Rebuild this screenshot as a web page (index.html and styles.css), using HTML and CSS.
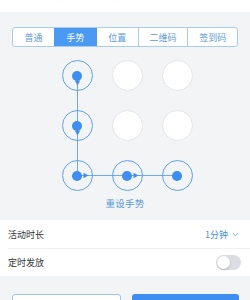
FILE: index.html
```html
<!DOCTYPE html>
<html lang="zh">
<head>
<meta charset="utf-8">
<link rel="stylesheet" href="styles.css">
</head>
<body>
<div class="header"><p class="hint">学生需按照设置的手势图案完成签到</p></div>

<div class="tabs">
  <div class="tab">普通</div>
  <div class="tab active">手势</div>
  <div class="tab">位置</div>
  <div class="tab">二维码</div>
  <div class="tab">签到码</div>
</div>

<div class="pattern-wrap">
  <div class="pattern">
    <svg class="lines" width="131" height="131" viewBox="0 0 131 131">
      <path d="M15.5 15.5 V115.5 H115.5" fill="none" stroke="#6aa9ee" stroke-width="1"/>
      <path d="M12.8 20.5 L18.2 20.5 L15.5 25.5 Z" fill="#3d8ef0"/>
      <path d="M12.8 70.5 L18.2 70.5 L15.5 75.5 Z" fill="#3d8ef0"/>
      <path d="M21.5 112.8 L21.5 118.2 L26.5 115.5 Z" fill="#3d8ef0"/>
      <path d="M71.5 112.8 L71.5 118.2 L76.5 115.5 Z" fill="#3d8ef0"/>
    </svg>
    <div class="node on"><span class="dot"></span></div>
    <div class="node"></div>
    <div class="node"></div>
    <div class="node on"><span class="dot"></span></div>
    <div class="node"></div>
    <div class="node"></div>
    <div class="node on"><span class="dot"></span></div>
    <div class="node on"><span class="dot"></span></div>
    <div class="node on"><span class="dot"></span></div>
  </div>
</div>
<div class="reset">重设手势</div>

<div class="list">
  <div class="row">
    <span class="label">活动时长</span>
    <span class="value">1分钟
      <svg class="chev" width="7" height="5" viewBox="0 0 7 5"><path d="M0.8 1 L3.5 3.7 L6.2 1" fill="none" stroke="#7fb0e8" stroke-width="1"/></svg>
    </span>
  </div>
  <div class="row">
    <span class="label">定时发放</span>
    <span class="switch"><span class="knob"></span></span>
  </div>
</div>

<div class="actions">
  <div class="btn ghost"></div>
  <div class="btn primary"></div>
</div>
</body>
</html>
```
FILE: styles.css
```css
* { box-sizing: border-box; }
html, body { margin: 0; padding: 0; }
body {
  width: 250px;
  height: 300px;
  overflow: hidden;
  background: #f3f4f6;
  font-family: "Noto Sans CJK SC", "Noto Sans", sans-serif;
}
.header {
  height: 12px;
  background: #fff;
  overflow: hidden;
  padding-left: 8px;
}
.hint {
  margin: -10px 0 0;
  font-size: 9px;
  line-height: 12px;
  color: #555;
  white-space: nowrap;
}
.tabs {
  display: flex;
  margin: 15px 12px 0;
  height: 20px;
  border: 1px solid #a9cbee;
  border-radius: 3px;
  background: #fff;
  overflow: hidden;
}
.tab {
  flex: 42 1 0;
  display: flex;
  align-items: center;
  justify-content: center;
  font-size: 9px;
  color: #5d9bd8;
  border-left: 1px solid #a9cbee;
}
.tab:nth-child(4), .tab:nth-child(5) { flex-grow: 50; }
.tab:first-child { border-left: none; }
.tab.active {
  background: #4a99f3;
  color: #fff;
  border-left-color: #4a99f3;
}
.tab.active + .tab { border-left-color: #4a99f3; }
.pattern-wrap {
  display: flex;
  justify-content: center;
  padding-left: 4px;
  margin-top: 13px;
}
.pattern {
  position: relative;
  display: grid;
  grid-template-columns: repeat(3, 31px);
  grid-template-rows: repeat(3, 31px);
  gap: 19px;
}
.lines {
  position: absolute;
  left: 0;
  top: 0;
  z-index: 0;
}
.node {
  position: relative;
  z-index: 1;
  width: 31px;
  height: 31px;
  border-radius: 50%;
  background: #fff;
  border: 1px solid #e3e5e9;
  display: flex;
  align-items: center;
  justify-content: center;
}
.node.on {
  background: transparent;
  border-color: #5fa2e8;
}
.dot {
  width: 10px;
  height: 10px;
  border-radius: 50%;
  background: #3d8ef0;
}
.reset {
  text-align: center;
  font-size: 9.5px;
  line-height: 14px;
  margin-top: 5px;
  color: #5a9ad6;
  letter-spacing: 0.2px;
}
.list {
  margin-top: 10px;
  background: #fff;
}
.row {
  height: 28px;
  margin-left: 8px;
  padding-right: 9px;
  display: flex;
  align-items: center;
  justify-content: space-between;
}
.row + .row { border-top: 1px solid #eef0f3; height: 28px; }
.label {
  font-size: 9px;
  color: #333;
}
.value {
  display: flex;
  align-items: center;
  gap: 4px;
  font-size: 9px;
  color: #4a90e2;
  padding-right: 2px;
}
.switch {
  width: 25px;
  height: 15px;
  border-radius: 8px;
  background: #dcdde2;
  display: flex;
  align-items: center;
  padding-left: 1px;
}
.knob {
  width: 13px;
  height: 13px;
  border-radius: 50%;
  background: #fff;
  box-shadow: 0 1px 2px rgba(0,0,0,0.2);
}
.actions {
  display: flex;
  gap: 11px;
  margin: 18px 11px 0 12px;
}
.btn {
  flex: 1;
  height: 30px;
  border-radius: 3px;
}
.btn.ghost {
  background: #fff;
  border: 1px solid #9fc4ec;
}
.btn.primary {
  background: #3d8ef0;
}
```
